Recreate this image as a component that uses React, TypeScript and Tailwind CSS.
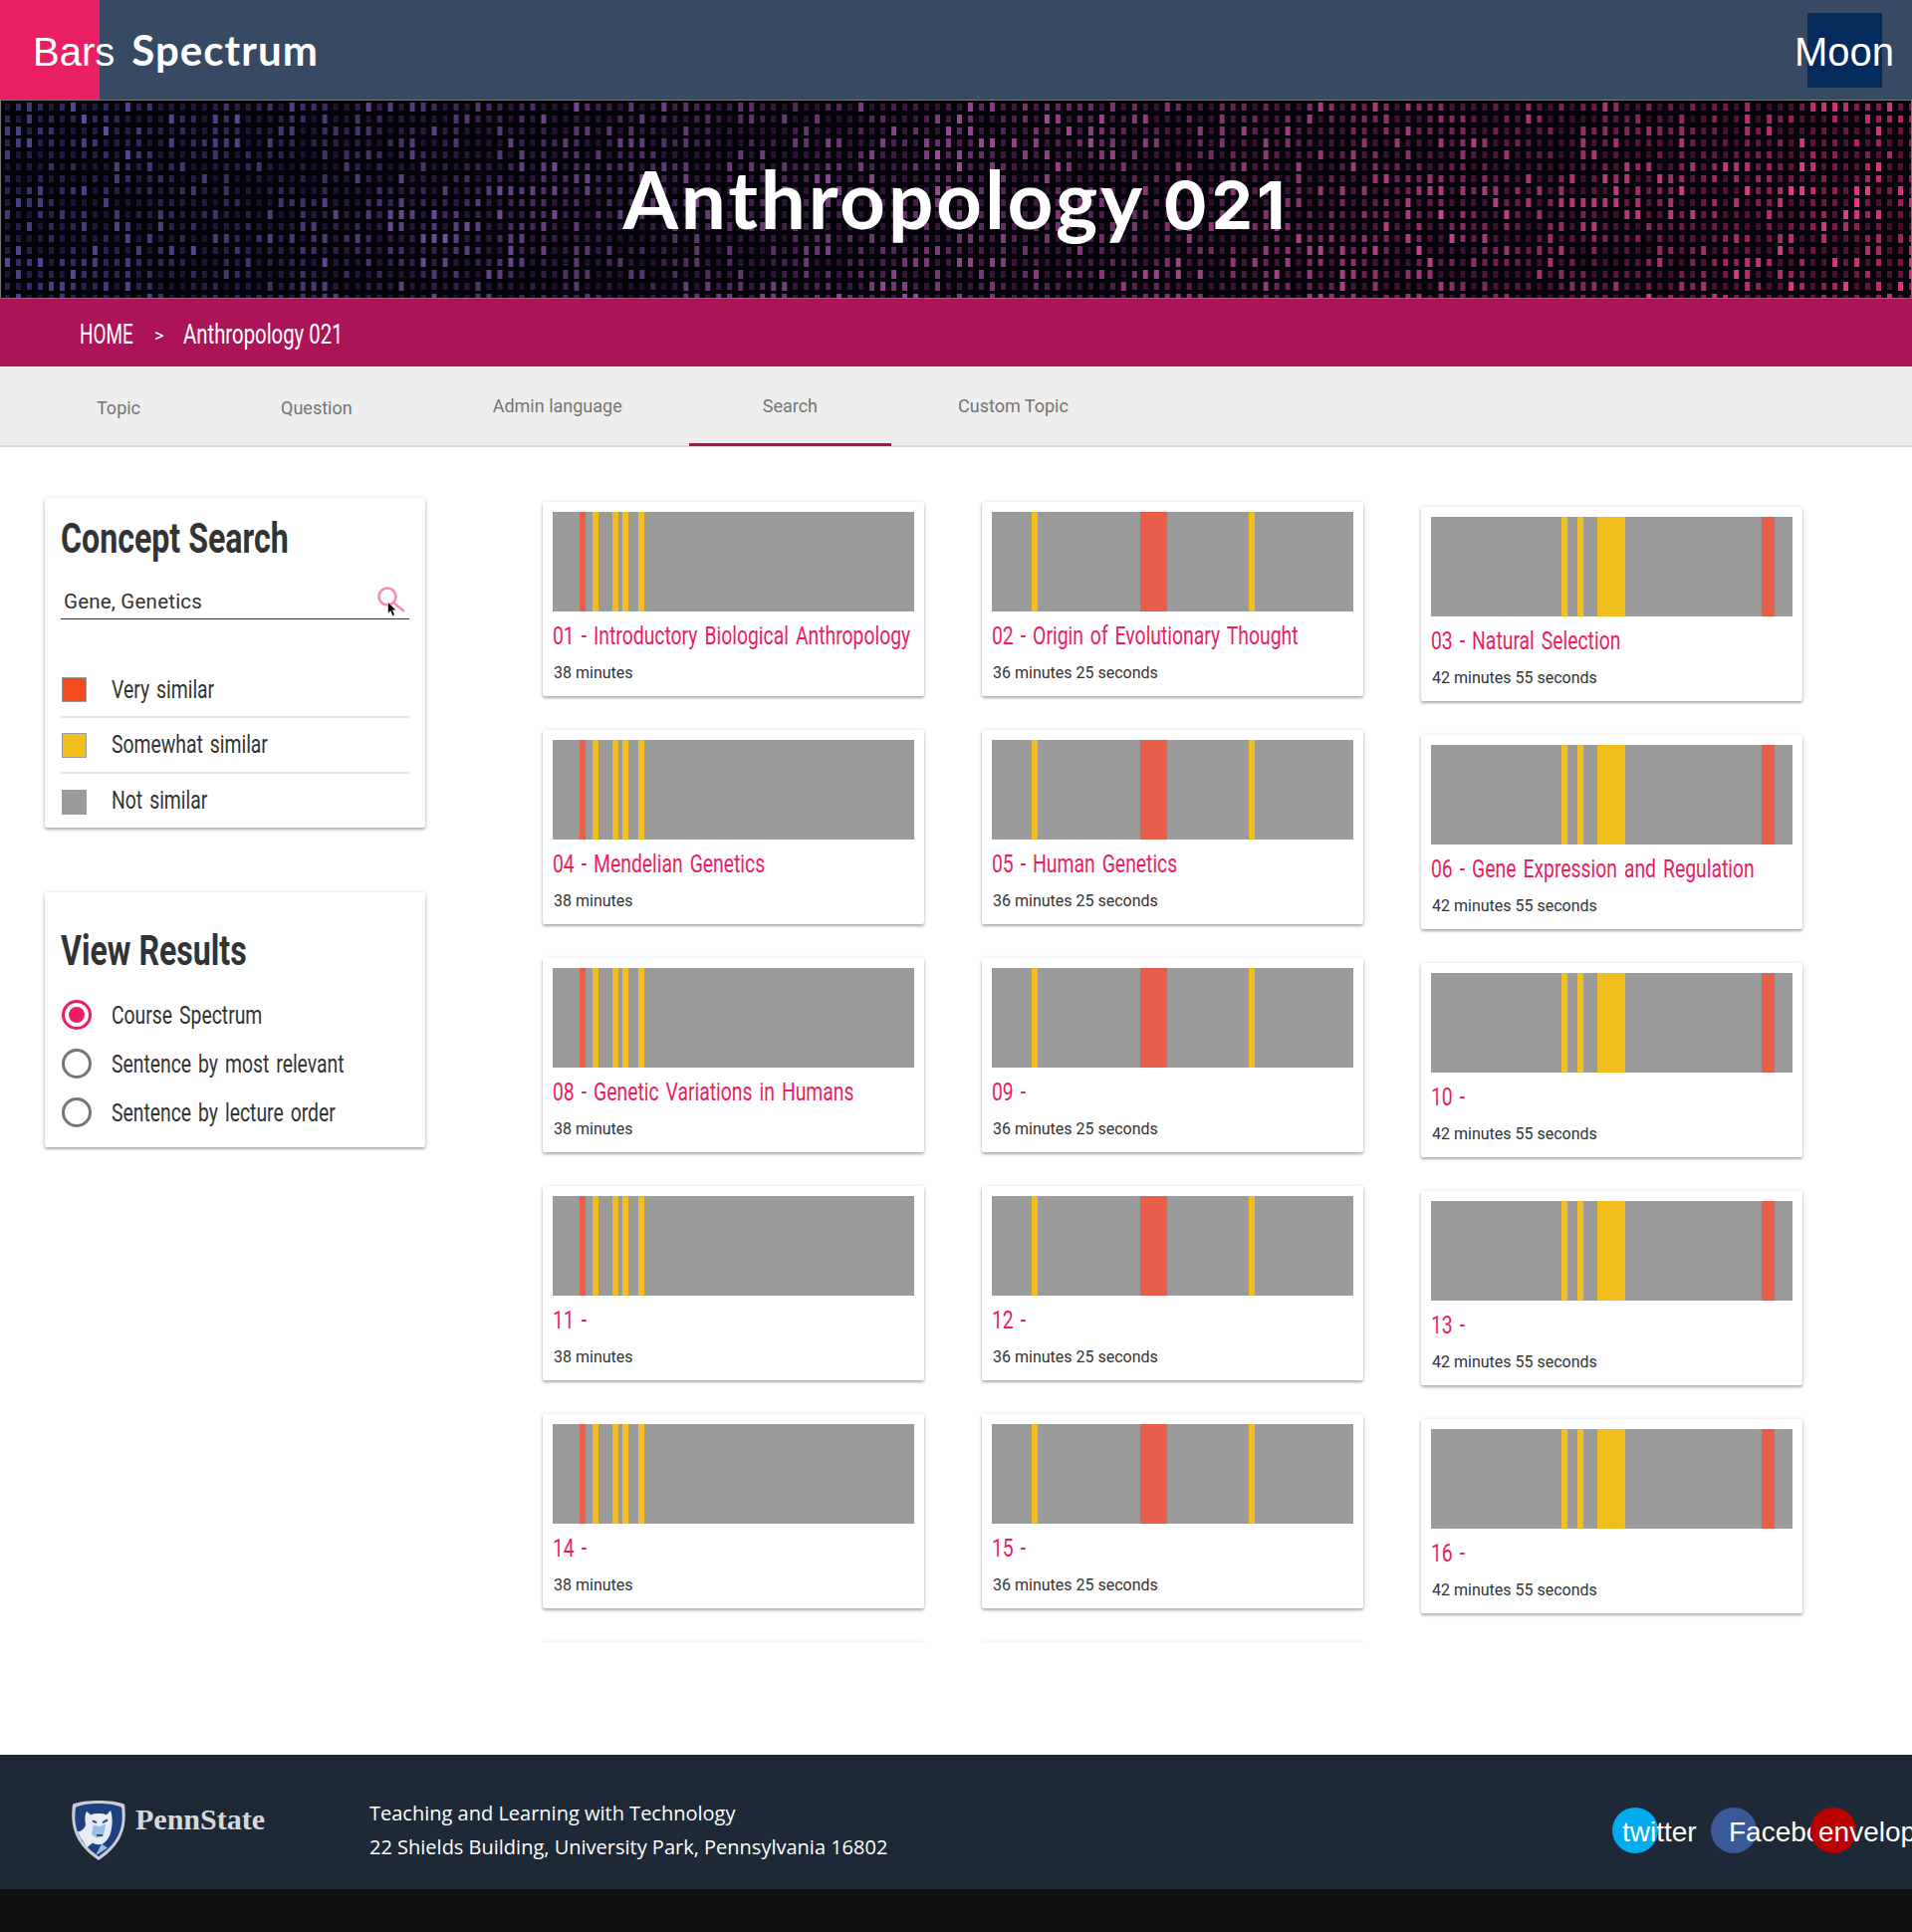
import React from "react";

// Oswald is not available, so Roboto is squeezed to its proportions
const COND = "inline-block shrink-0 origin-left scale-x-[0.73] whitespace-nowrap font-['Roboto',sans-serif] font-normal [word-spacing:3px]";
const COND_BOLD = "inline-block origin-left scale-x-[0.765] whitespace-nowrap font-['Roboto',sans-serif] font-bold";
const ROBOTO = "font-['Roboto',sans-serif]";
const CARD = "rounded-[2px] bg-white shadow-[0_2px_3px_rgba(0,0,0,0.3),0_0_4px_rgba(0,0,0,0.1)]";

// grey bar segments: [start, end, colour] in px of the 363px bar
type Band = [number, number, string];
const RED = "#e95d4b";
const YEL = "#f0bf1d";

const COLUMNS: { bands: Band[]; duration: string; pad: string; titles: string[] }[] = [
  {
    bands: [[27, 33, RED], [40, 46, YEL], [60, 66, YEL], [70, 76, YEL], [86, 92, YEL]],
    duration: "38 minutes",
    pad: "pt-[55px]",
    titles: ["01 - Introductory Biological Anthropology", "04 - Mendelian Genetics", "08 - Genetic Variations in Humans", "11 -", "14 -", ""],
  },
  {
    bands: [[40, 46, YEL], [149, 176, RED], [258, 264, YEL]],
    duration: "36 minutes 25 seconds",
    pad: "pt-[55px]",
    titles: ["02 - Origin of Evolutionary Thought", "05 - Human Genetics", "09 -", "12 -", "15 -", ""],
  },
  {
    bands: [[131, 137, YEL], [147, 153, YEL], [167, 195, YEL], [332, 345, RED]],
    duration: "42 minutes 55 seconds",
    pad: "pt-[60px]",
    titles: ["03 - Natural Selection", "06 - Gene Expression and Regulation", "10 -", "13 -", "16 -", ""],
  },
];

const TABS = [
  { label: "Topic", top: "pt-[30px]" },
  { label: "Question", top: "pt-[30px]" },
  { label: "Admin language", top: "pt-[28px]" },
  { label: "Search", top: "pt-[28px]", active: true },
  { label: "Custom Topic", top: "pt-[28px]" },
];

function Banner() {
  let seed = 21;
  const rnd = () => {
    seed = (seed * 16807) % 2147483647;
    return seed / 2147483647;
  };
  const dots: React.ReactNode[] = [];
  for (let r = 0; r < 17; r++) {
    for (let c = 0; c < 175; c++) {
      const t = c / 174;
      // blue-violet on the left, through purple, to hot pink on the right
      const red = Math.round(105 + 135 * t);
      const green = Math.round(100 - 45 * t);
      const blue = Math.round(205 - 75 * t);
      const patch = 0.85 + 0.15 * Math.sin(c / 9 + r / 3) * Math.cos(c / 23 - r / 5);
      const v = rnd();
      const level = Math.min(1, (0.28 + 0.72 * v * v) * patch * (0.8 + 0.35 * t));
      const h = v > 0.8 ? 9 : 7;
      dots.push(
        <rect
          key={`${r}-${c}`}
          x={4 + c * 11}
          y={3 + r * 12 - (h - 7) / 2}
          width={5}
          height={h}
          fill={`rgb(${red},${green},${blue})`}
          opacity={level}
        />,
      );
    }
  }
  return (
    <svg className="absolute inset-0 h-full w-full" viewBox="0 0 1920 198" preserveAspectRatio="none">
      <defs>
        <filter id="soft">
          <feGaussianBlur stdDeviation="0.5" />
        </filter>
      </defs>
      <rect width="1920" height="198" fill="#04030a" />
      <g filter="url(#soft)">{dots}</g>
    </svg>
  );
}

function Tile({ title, duration, bands }: { title: string; duration: string; bands: Band[] }) {
  const parts: React.ReactNode[] = [];
  let at = 0;
  bands.forEach(([start, end, colour]) => {
    parts.push(<div key={`g${start}`} style={{ width: start - at }} />);
    parts.push(<div key={`b${start}`} style={{ width: end - start, backgroundColor: colour }} />);
    at = end;
  });
  return (
    <div className={`${CARD} h-[195px] w-[383px] shrink-0 px-[10px] pt-[10px]`}>
      <div className="flex h-[100px] w-[363px] bg-[#9b9b9b]">{parts}</div>
      <h3 className="mt-[6px] h-[36px]">
        <span className={`${COND} text-[26.5px] leading-[36px] text-[#e91e63]`}>{title}</span>
      </h3>
      <p className={`${ROBOTO} mt-[8px] pl-[1px] text-[16px] leading-[24px] text-[#333]`}>{duration}</p>
    </div>
  );
}

function Legend({ colour, label, line, lift }: { colour: string; label: string; line?: boolean; lift?: string }) {
  return (
    <div className={`flex h-[56px] items-center ${line ? "border-b-2 border-[#e4e4e4]" : ""}`}>
      <span className={`ml-[1px] h-[25px] w-[25px] shrink-0 border border-[#9b9b9b] ${colour}`} />
      <span className={`${COND} ml-[25px] text-[26.5px] text-[#333] ${lift ?? ""}`}>{label}</span>
    </div>
  );
}

function Radio({ label, on }: { label: string; on?: boolean }) {
  return (
    <div className="flex h-[49px] items-center">
      <span
        className={`ml-[1px] flex h-[30px] w-[30px] shrink-0 items-center justify-center rounded-full border-[3px] ${
          on ? "border-[#e91e63]" : "border-[#757575]"
        }`}
      >
        {on && <span className="h-[16px] w-[16px] rounded-full bg-[#e91e63]" />}
      </span>
      <span className={`${COND} ml-[20px] text-[26.5px] text-[#333]`}>{label}</span>
    </div>
  );
}

function Shield() {
  return (
    <svg width="58" height="62" viewBox="0 0 58 64" preserveAspectRatio="none">
      <path d="M29 1C20 1 10 2 3 5C1 22 1 44 29 63C57 44 57 22 55 5C48 2 38 1 29 1Z" fill="#c9ced6" />
      <path d="M29 4C21 4 12 5 6 8C4 24 5 42 29 59C53 42 54 24 52 8C46 5 37 4 29 4Z" fill="#1e407c" />
      <path
        d="M17 12L21 16C25 14 33 14 37 16L41 11C43 17 43 24 42 30C41 38 37 44 33 46C30 47 26 47 23 45L17 50C15 44 10 40 8 33C12 33 15 30 16 26C15 21 15 16 17 12Z"
        fill="#e8edf4"
      />
      <path d="M24 26L30 28L36 25L34 38L27 40L22 36Z" fill="#96bee6" />
      <path d="M23 22L27 24M33 24L38 21M27 37L33 37" stroke="#1e407c" strokeWidth="2" fill="none" />
      <path d="M26 58L32 46L38 50Z" fill="#96bee6" />
    </svg>
  );
}

export default function App() {
  return (
    <div className="min-h-[1940px] w-[1920px] overflow-hidden bg-white">
      <header className="relative flex h-[100px] items-center bg-[#374a64] text-white">
        <div className="h-full w-[100px] bg-[#e91e63]" />
        <div className="absolute left-[33px] top-[26px] flex items-baseline text-[40px] leading-[48px]">
          <span className="font-['Liberation_Sans',sans-serif]">Bars</span>
          <span className="ml-[17px] font-['Lato',sans-serif] text-[42px] font-bold tracking-[0.025em]">Spectrum</span>
        </div>
        <div className="ml-auto mr-[30px] h-[75px] w-[75px] bg-[#052a5c]" />
        <span className="absolute left-[1802px] top-[28px] font-['Liberation_Sans',sans-serif] text-[40px] leading-[48px]">
          Moon
        </span>
      </header>

      <section className="relative flex h-[200px] items-center justify-center overflow-hidden border border-[#777]">
        <Banner />
        <h1 className="relative -mt-[2px] flex items-baseline font-['Lato',sans-serif] text-[80px] font-bold leading-none tracking-[0.035em] text-white">
          <span>Anthropology</span>
          <span className="ml-[18px] font-['Inter',sans-serif] text-[66px] tracking-[0.06em]">021</span>
        </h1>
      </section>

      <nav className="flex h-[68px] items-center bg-[#ad1457] pl-[80px] pt-[5px] text-white">
        <span className="w-[75px]">
          <span className="inline-block origin-left scale-x-[0.7] whitespace-nowrap font-['Roboto',sans-serif] text-[27px]">HOME</span>
        </span>
        <span className="w-[29px] font-['Roboto',sans-serif] text-[18px]">&gt;</span>
        <span className="inline-block origin-left scale-x-[0.753] whitespace-nowrap font-['Roboto',sans-serif] text-[27px]">
          Anthropology 021
        </span>
      </nav>

      <div className={`${ROBOTO} flex h-[81px] border-b-2 border-[#dcdcdc] bg-[#eee] pl-[23px] text-[18px] text-[#757575]`}>
        {TABS.map((tab, i) => (
          <div
            key={tab.label}
            className={`h-[80px] px-[74px] ${i > 0 ? "-ml-[7px]" : ""} ${tab.active ? "border-b-[3px] border-[#ad1457]" : ""}`}
          >
            <div className={`${tab.top} leading-[24px]`}>{tab.label}</div>
          </div>
        ))}
      </div>

      <main className="flex h-[1313px]">
        <aside className="ml-[45px] w-[382px] shrink-0 pt-[51px]">
          <div className={`${CARD} h-[331px] px-[16px]`}>
            <h2 className="pt-[16px] leading-[50px]">
              <span className={`${COND_BOLD} text-[42px] leading-[50px] text-[#333]`}>Concept Search</span>
            </h2>
            <div className="relative mt-[8px] h-[40px] border-b border-[#333] pl-[3px] pt-[3px]">
              <span className={`${ROBOTO} text-[20.5px] leading-[38px] tracking-[0.01em] text-[#333]`}>Gene, Genetics</span>
              <svg className="absolute left-[315px] top-[6px]" width="30" height="30" viewBox="0 0 30 30">
                <circle cx="13" cy="11" r="8.5" fill="none" stroke="#f48fb1" strokeWidth="2.6" />
                <path d="M19 17L30 26" stroke="#f48fb1" strokeWidth="2.6" />
              </svg>
              <svg className="absolute left-[328px] top-[22px]" width="10" height="16" viewBox="0 0 10 16">
                <path d="M0.5 0.5V12L3.2 9.6L5 14.6L7.4 13.6L5.4 8.8H9Z" fill="#000" stroke="#fff" strokeWidth="0.6" />
              </svg>
            </div>
            <div className="mt-[43px]">
              <Legend colour="bg-[#f44a1f]" label="Very similar" line />
              <Legend colour="bg-[#f0bf1d]" label="Somewhat similar" line lift="-mt-[3px]" />
              <Legend colour="bg-[#9b9b9b]" label="Not similar" lift="-mt-[5px]" />
            </div>
          </div>

          <div className={`${CARD} mt-[65px] h-[256px] px-[16px]`}>
            <h2 className="pt-[34px] leading-[50px]">
              <span className={`${COND_BOLD} text-[42px] leading-[50px] text-[#333]`}>View Results</span>
            </h2>
            <div className="mt-[6px]">
              <Radio label="Course Spectrum" on />
              <Radio label="Sentence by most relevant" />
              <Radio label="Sentence by lecture order" />
            </div>
          </div>
        </aside>

        <div className="ml-[112px] flex h-[1201px] gap-[47px] overflow-hidden px-[6px] pb-[4px]">
          {COLUMNS.map((col) => (
            <div key={col.duration} className={`${col.pad} mr-[11px] flex flex-col gap-[34px]`}>
              {col.titles.map((title, i) =>
                i < 5 ? (
                  <Tile key={i} title={title} duration={col.duration} bands={col.bands} />
                ) : (
                  <div key={i} className="h-[195px] w-[383px] shrink-0 rounded-[2px] bg-white shadow-[0_0_4px_rgba(0,0,0,0.1)]" />
                ),
              )}
            </div>
          ))}
        </div>
      </main>

      <footer className="flex h-[135px] items-center bg-[#1e2938] text-white">
        <div className="ml-[70px] mt-[16px] flex items-center">
          <Shield />
          <span className="-mt-[22px] ml-[8px] font-['Liberation_Serif',serif] text-[30px] font-bold text-[#d8d8d8]">PennState</span>
        </div>
        <div className="ml-[105px] mt-[16px] font-['Open_Sans',sans-serif] text-[20px] leading-[34px]">
          <p>Teaching and Learning with Technology</p>
          <p>22 Shields Building, University Park, Pennsylvania 16802</p>
        </div>
        <div className="ml-auto mt-[17px] flex font-['Liberation_Sans',sans-serif] text-[28px] leading-[50px]">
          <span className="h-[46px] w-[46px] whitespace-nowrap rounded-full bg-[#00aced] pl-[10px]">twitter</span>
          <span className="ml-[53px] h-[46px] w-[46px] whitespace-nowrap rounded-full bg-[#3b5998] pl-[18px]">Facebook</span>
          <span className="relative ml-[54px] mr-[56px] h-[46px] w-[46px] whitespace-nowrap rounded-full bg-[#bb0000] pl-[8px]">envelope</span>
        </div>
      </footer>
      <div className="h-[43px] bg-[#111]" />
    </div>
  );
}
